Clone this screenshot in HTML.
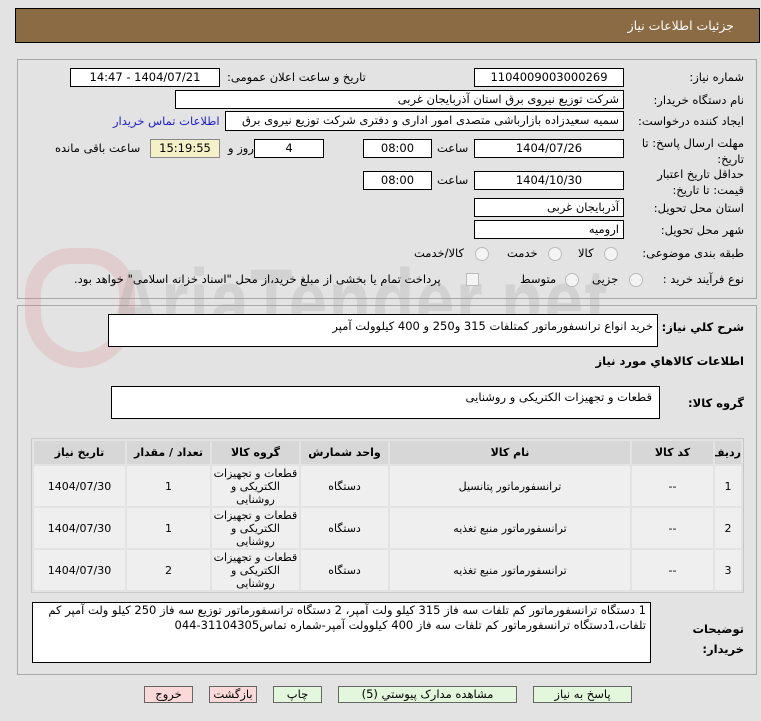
<!DOCTYPE html>
<html><head><meta charset="utf-8"><style>
body{margin:0;width:761px;height:721px;background:#e3e3e3;position:relative;overflow:hidden;font-family:Tahoma,"DejaVu Sans","Liberation Sans",sans-serif;font-size:11px;color:#000;direction:rtl}
.a{position:absolute;white-space:nowrap}
.in{position:absolute;background:#fff;border:1px solid #000;box-sizing:border-box;padding:0 4px;line-height:17px;font-size:11.5px;overflow:hidden;white-space:nowrap}
.c{text-align:center}
.lb{position:absolute;white-space:nowrap;font-size:11.5px}
.panel{position:absolute;border:1px solid #a8a8a8;box-sizing:border-box}
table{position:absolute;border-collapse:separate;border-spacing:2px;background:#e3e3e3;border:1px solid #c8c8c8;table-layout:fixed}
td,th{text-align:center;font-size:11px;padding:0;overflow:hidden}
th{background:#d7d7d7;height:23px;font-weight:bold}
td{background:#efefef;height:40px;line-height:13px}
.btn{position:absolute;top:686px;height:17px;border:1px solid #666;box-sizing:border-box;text-align:center;font-size:11.5px;line-height:15px}
.g{background:#e2f7dc}.p{background:#fcd9d9}
.radio{position:absolute;width:12px;height:12px;border-radius:50%;border:1px solid #bbb;background:#f4f4f4}
</style></head><body>
<div class="a" style="left:15px;top:8px;width:745px;height:35px;background:#8b6b43;border:1px solid #000;box-sizing:border-box"></div>
<div class="a" style="right:27px;top:18px;color:#fff;font-size:12.5px">جزئیات اطلاعات نیاز</div>

<div class="panel" style="left:17px;top:59px;width:740px;height:240px"></div>
<div class="panel" style="left:17px;top:305px;width:740px;height:370px"></div>

<div class="a" style="left:25px;top:248px;width:110px;height:120px;border:16px solid rgba(220,120,120,.2);border-radius:50px 50px 60px 60px;box-sizing:border-box"></div>
<div class="a" style="left:110px;top:250px;font-size:92px;font-weight:bold;color:rgba(150,150,150,.22);direction:ltr;font-family:'Liberation Sans',sans-serif;transform:scaleX(.75);transform-origin:left;letter-spacing:2px">AriaTender.net</div>

<div class="lb" style="right:17px;top:70px">شماره نیاز:</div>
<div class="in c" style="left:474px;top:68px;width:150px;height:19px">1104009003000269</div>
<div class="lb" style="left:227px;top:70px">تاریخ و ساعت اعلان عمومی:</div>
<div class="in c" style="left:70px;top:68px;width:150px;height:19px">1404/07/21 - 14:47</div>

<div class="lb" style="right:17px;top:93px">نام دستگاه خریدار:</div>
<div class="in" style="left:175px;top:90px;width:449px;height:19px">شرکت توزیع نیروی برق استان آذربایجان غربی</div>

<div class="lb" style="right:17px;top:114px">ایجاد کننده درخواست:</div>
<div class="in" style="left:225px;top:111px;width:399px;height:20px">سمیه سعیدزاده بازارباشی متصدی امور اداری و دفتری  شرکت توزیع نیروی برق</div>
<div class="lb" style="left:113px;top:114px;color:#2020d0">اطلاعات تماس خریدار</div>

<div class="lb" style="right:17px;top:135px;line-height:16px;white-space:normal;width:112px">مهلت ارسال پاسخ: تا تاریخ:</div>
<div class="in c" style="left:474px;top:139px;width:150px;height:19px">1404/07/26</div>
<div class="lb" style="left:437px;top:141px">ساعت</div>
<div class="in c" style="left:363px;top:139px;width:69px;height:19px">08:00</div>
<div class="in c" style="left:254px;top:139px;width:70px;height:19px">4</div>
<div class="lb" style="left:228px;top:141px">روز و</div>
<div class="in c" style="left:150px;top:139px;width:70px;height:19px;background:#f4f1c8;border-color:#888">15:19:55</div>
<div class="lb" style="left:55px;top:141px">ساعت باقی مانده</div>

<div class="lb" style="right:17px;top:166px;line-height:16px;white-space:normal;width:112px">حداقل تاریخ اعتبار قیمت: تا تاریخ:</div>
<div class="in c" style="left:474px;top:171px;width:150px;height:19px">1404/10/30</div>
<div class="lb" style="left:437px;top:173px">ساعت</div>
<div class="in c" style="left:363px;top:171px;width:69px;height:19px">08:00</div>

<div class="lb" style="right:17px;top:201px">استان محل تحویل:</div>
<div class="in" style="left:474px;top:198px;width:150px;height:19px">آذربایجان غربی</div>
<div class="lb" style="right:17px;top:223px">شهر محل تحویل:</div>
<div class="in" style="left:474px;top:220px;width:150px;height:19px">ارومیه</div>

<div class="lb" style="right:17px;top:246px">طبقه بندی موضوعی:</div>
<div class="radio" style="left:604px;top:247px"></div><div class="lb" style="left:578px;top:246px">کالا</div>
<div class="radio" style="left:548px;top:247px"></div><div class="lb" style="left:507px;top:246px">خدمت</div>
<div class="radio" style="left:475px;top:247px"></div><div class="lb" style="left:414px;top:246px">کالا/خدمت</div>

<div class="lb" style="right:17px;top:272px">نوع فرآیند خرید :</div>
<div class="radio" style="left:629px;top:273px"></div><div class="lb" style="left:592px;top:272px">جزیی</div>
<div class="radio" style="left:565px;top:273px"></div><div class="lb" style="left:520px;top:272px">متوسط</div>
<div class="a" style="left:466px;top:273px;width:11px;height:11px;border:1px solid #bbb;background:#f4f4f4"></div>
<div class="lb" style="left:74px;top:272px">پرداخت تمام یا بخشی از مبلغ خرید،از محل "اسناد خزانه اسلامی" خواهد بود.</div>

<div class="lb" style="right:17px;top:320px;font-weight:bold">شرح کلي نياز:</div>
<div class="in" style="left:108px;top:314px;width:550px;height:33px;line-height:22px">خرید انواع ترانسفورماتور کمتلفات 315 و250 و 400 کیلوولت آمپر</div>
<div class="lb" style="right:17px;top:354px;font-weight:bold">اطلاعات کالاهاي مورد نياز</div>
<div class="lb" style="right:17px;top:396px;font-weight:bold">گروه کالا:</div>
<div class="in" style="left:111px;top:386px;width:549px;height:33px;line-height:20px;padding-right:7px">قطعات و تجهیزات الکتریکی و روشنایی</div>

<table style="left:31px;top:438px;width:713px">
<tr><th style="width:26px">ردیف</th><th style="width:81px">کد کالا</th><th style="width:240px">نام کالا</th><th style="width:87px">واحد شمارش</th><th style="width:87px">گروه کالا</th><th style="width:83px">تعداد / مقدار</th><th>تاریخ نیاز</th></tr>
<tr><td>1</td><td>--</td><td>ترانسفورماتور پتانسیل</td><td>دستگاه</td><td><div style="height:39px;overflow:hidden">قطعات و تجهیزات<br>الکتریکی و<br>روشنایی</div></td><td>1</td><td>1404/07/30</td></tr>
<tr><td>2</td><td>--</td><td>ترانسفورماتور منبع تغذیه</td><td>دستگاه</td><td><div style="height:39px;overflow:hidden">قطعات و تجهیزات<br>الکتریکی و<br>روشنایی</div></td><td>1</td><td>1404/07/30</td></tr>
<tr><td>3</td><td>--</td><td>ترانسفورماتور منبع تغذیه</td><td>دستگاه</td><td><div style="height:39px;overflow:hidden">قطعات و تجهیزات<br>الکتریکی و<br>روشنایی</div></td><td>2</td><td>1404/07/30</td></tr>
</table>

<div class="lb" style="right:17px;top:619px;font-weight:bold;line-height:20px;white-space:normal;width:60px">توضیحات خریدار:</div>
<div class="in" style="left:32px;top:602px;width:619px;height:61px;white-space:normal;line-height:15px">1 دستگاه ترانسفورماتور کم تلفات سه فاز 315 کیلو ولت آمپر، 2 دستگاه ترانسفورماتور توزیع  سه فاز 250 کیلو ولت آمپر کم تلفات،1دستگاه ترانسفورماتور کم تلفات سه فاز 400 کیلوولت آمپر-شماره تماس31104305-044</div>

<div class="btn g" style="left:533px;width:99px">پاسخ به نیاز</div>
<div class="btn g" style="left:338px;width:179px">مشاهده مدارک پیوستي (5)</div>
<div class="btn g" style="left:273px;width:49px">چاپ</div>
<div class="btn p" style="left:209px;width:48px">بازگشت</div>
<div class="btn p" style="left:144px;width:49px">خروج</div>
</body></html>
